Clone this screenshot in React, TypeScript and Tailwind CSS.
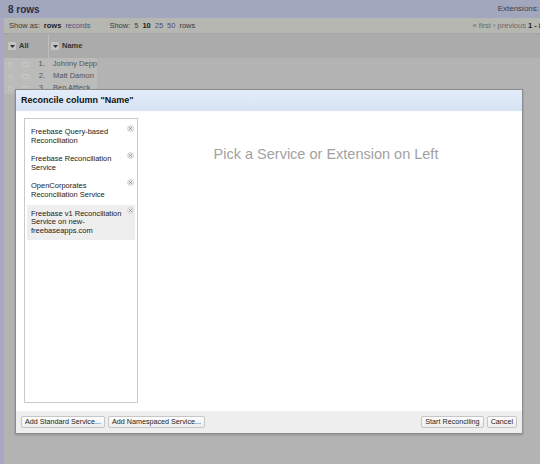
import React from "react";

const font = { fontFamily: '"Liberation Sans", Arial, sans-serif' };

function CloseIcon() {
    return (
        <svg width="7" height="7" viewBox="0 0 7 7" className="absolute right-[1px] top-[2px]">
            <circle cx="3.5" cy="3.5" r="3" fill="#ececec" stroke="#c4c4c4" strokeWidth="0.6" />
            <path d="M2.1 2.1 L4.9 4.9 M4.9 2.1 L2.1 4.9" stroke="#8a8a8a" strokeWidth="0.8" />
        </svg>
    );
}

function DropBox() {
    return (
        <span className="inline-flex h-[8px] w-[8px] items-center justify-center rounded-[1px] bg-[#c4c4c4]">
            <svg width="5" height="3" viewBox="0 0 5 3">
                <path d="M0 0 L5 0 L2.5 3 Z" fill="#333" />
            </svg>
        </span>
    );
}

function Btn({ children }: { children: React.ReactNode }) {
    return (
        <button className="h-[12px] whitespace-nowrap rounded-[2px] border border-[#c6c6c6] bg-gradient-to-b from-[#fdfdfd] to-[#ededed] px-[3px] text-[7.2px] leading-[10px] text-[#222]">
            {children}
        </button>
    );
}

const services = [
    "Freebase Query-based Reconciliation",
    "Freebase Reconciliation Service",
    "OpenCorporates Reconciliation Service",
    "Freebase v1 Reconciliation Service on new-freebaseapps.com",
];

const rows = [
    ["1.", "Johnny Depp"],
    ["2.", "Matt Damon"],
    ["3.", "Ben Affleck"],
];

export default function App() {
    return (
        <div className="relative h-[464px] w-[540px] overflow-hidden bg-[#b3b3b3]" style={font}>
            {/* dimmed page behind */}
            <div className="flex h-[18px] items-center justify-between bg-[#a3a7bd] pl-[8px] pr-[1px]">
                <span className="text-[10px] font-bold text-[#2b3046]">8 rows</span>
                <span className="text-[8px] text-[#3d3f4a]">Extensions:</span>
            </div>
            <div className="flex h-[15px] items-center justify-between whitespace-nowrap bg-[#b7b7b2] pl-[9px] text-[7.5px] text-[#3a3a3a]">
                <div className="flex items-center">
                    <span>Show as:</span>
                    <span className="ml-[4px] font-bold text-[#222]">rows</span>
                    <span className="ml-[4px] text-[#4a4f7e]">records</span>
                    <span className="ml-[19px]">Show:</span>
                    <span className="ml-[4px]">5</span>
                    <span className="ml-[4px] font-bold text-[#222]">10</span>
                    <span className="ml-[4px] text-[#4a4f7e]">25</span>
                    <span className="ml-[4px] text-[#4a4f7e]">50</span>
                    <span className="ml-[4px]">rows</span>
                </div>
                <div className="-mr-[3px] text-[#6a6a6a]">
                    « first ‹ previous <span className="font-bold text-[#222]">1 - 8</span>
                </div>
            </div>
            <div className="flex h-[25px] border-t border-[#a4a4a4] bg-[#ababab] text-[7.5px] font-bold text-[#333]">
                <div className="flex w-[48px] items-center gap-[3px] pl-[8px]">
                    <DropBox />
                    <span>All</span>
                </div>
                <div className="flex items-center gap-[3px] border-l border-[#bdbdbd] pl-[2px]">
                    <DropBox />
                    <span>Name</span>
                </div>
            </div>
            <div className="flex flex-col whitespace-nowrap text-[7.5px] text-[#555]">
                {rows.map(([n, name]) => (
                    <div key={n} className="flex h-[12px] items-center">
                        <div className="flex h-full w-[97px] items-center bg-[#bbbbb9]">
                            <span className="ml-[8px] h-[5px] w-[5px] rounded-full border border-[#c9c9c9]" />
                            <span className="ml-[9px] h-[5px] w-[7px] rounded-[1px] border border-[#c9c9c9]" />
                            <span className="ml-[4px] w-[12px] text-right">{n}</span>
                            <span className="ml-[8px]">{name}</span>
                        </div>
                    </div>
                ))}
            </div>
            <div className="absolute left-0 top-[18px] h-[446px] w-[4px] bg-[#a9a7c3]" />

            {/* dialog */}
            <div className="absolute left-[15px] top-[89px] flex h-[345px] w-[508px] flex-col border border-[#8c8c8c] bg-white shadow-[0_1px_2px_rgba(0,0,0,0.2)]">
                <div className="flex h-[21px] items-center bg-gradient-to-b from-[#e4edf9] to-[#d6e3f4] px-[5px] text-[9px] font-bold text-[#111]">
                    Reconcile column "Name"
                </div>
                <div className="flex flex-1 px-[8px] pb-[8px] pt-[7px]">
                    <div className="flex w-[114px] flex-col border border-[#cacaca] px-[2px] pt-[4px]">
                        {services.map((s, i) => (
                            <div
                                key={s}
                                className={`relative py-[5px] pl-[4px] pr-[8px] text-[7.5px] leading-[8.6px] text-[#222] ${
                                    i === 3 ? "bg-[#eeeeee]" : ""
                                }`}
                            >
                                {s}
                                <CloseIcon />
                            </div>
                        ))}
                    </div>
                    <div className="flex flex-1 justify-center pt-[28px]">
                        <span className="text-[14.5px] leading-[17px] text-[#a2a2a2]">
                            Pick a Service or Extension on Left
                        </span>
                    </div>
                </div>
                <div className="flex h-[22px] items-center justify-between bg-[#eeeeee] px-[5px]">
                    <div className="flex gap-[3px]">
                        <Btn>Add Standard Service...</Btn>
                        <Btn>Add Namespaced Service...</Btn>
                    </div>
                    <div className="flex gap-[3px]">
                        <Btn>Start Reconciling</Btn>
                        <Btn>Cancel</Btn>
                    </div>
                </div>
            </div>
        </div>
    );
}
